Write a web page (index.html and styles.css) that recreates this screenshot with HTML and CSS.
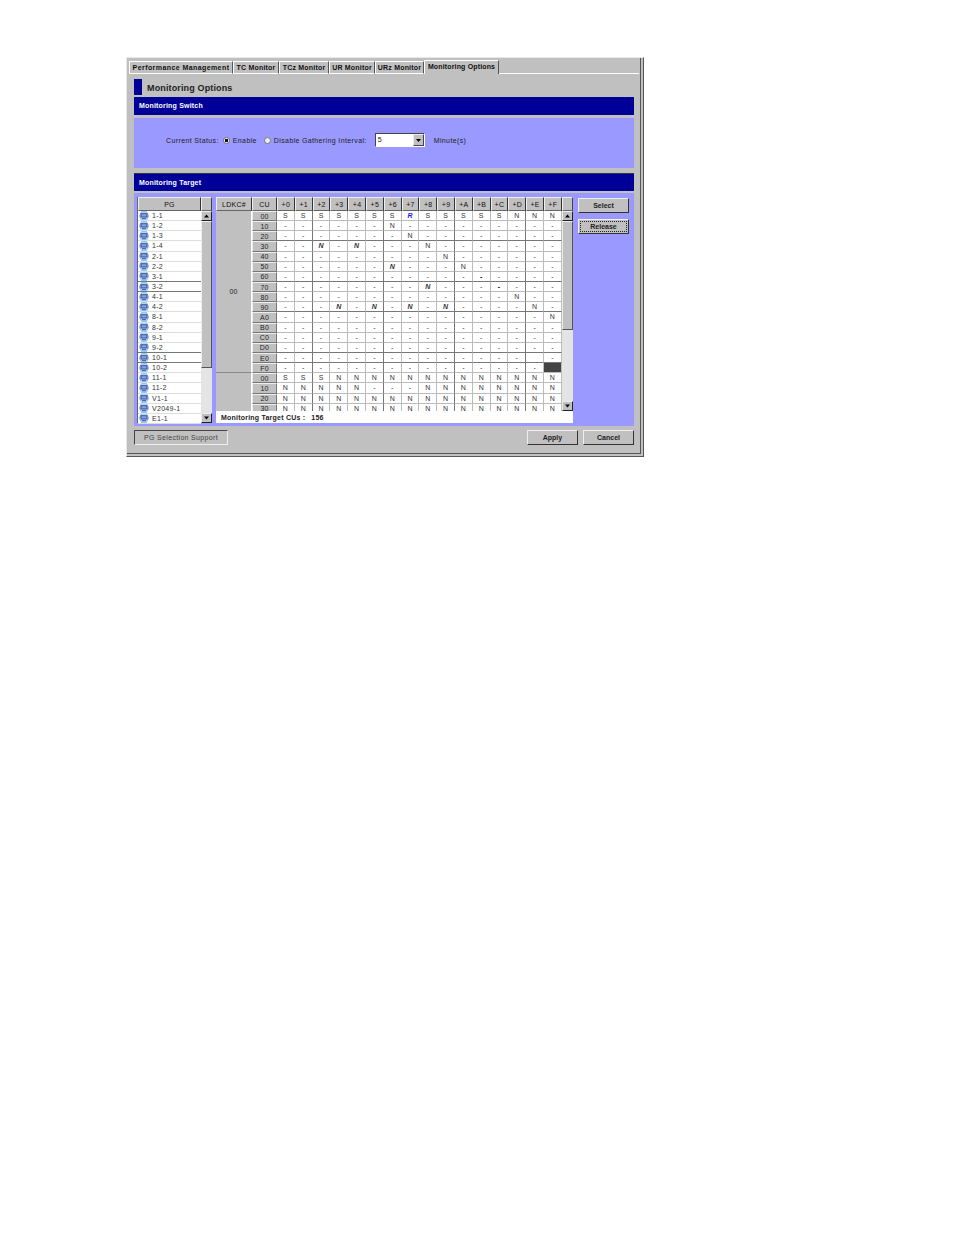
FILE: index.html
```html
<!DOCTYPE html>
<html lang="en">
<head>
<meta charset="utf-8">
<title>Monitoring Options</title>
<link rel="stylesheet" href="styles.css">
</head>
<body>
<svg class="defs" width="0" height="0" aria-hidden="true">
  <symbol id="pg" viewBox="0 0 10 10">
    <path d="M2.500 .5h5L9.800 5 7.500 9.500h-5L.2 5z" fill="#a8d8fa" stroke="#6aa8e8" stroke-width=".6"/>
    <rect x="1.500" y="2.200" width="7" height="4.300" fill="#3a4f9e"/>
    <rect x="2.500" y="3.200" width="5" height="2.300" fill="#8f9fd8"/>
    <rect x="3" y="7.200" width="4" height="1" fill="#3a4f9e"/>
  </symbol>
</svg>
<main class="window">
  <nav class="tabs">
    <span class="tab w1">Performance Management</span>
    <span class="tab w2">TC Monitor</span>
    <span class="tab w3">TCz Monitor</span>
    <span class="tab w4">UR Monitor</span>
    <span class="tab w5">URz Monitor</span>
    <span class="tab active">Monitoring Options</span>
    <span class="tab-rest"></span>
  </nav>
  <section class="content">
    <div class="title"><i class="title-mark"></i><h1>Monitoring Options</h1></div>
    <h2 class="bar">Monitoring Switch</h2>
    <div class="switch-panel">
      <span class="lbl first">Current Status:</span>
      <i class="radio on"></i><span class="lbl">Enable</span>
      <i class="radio"></i><span class="lbl">Disable</span>
      <span class="lbl interval">Gathering Interval:</span>
      <span class="combo"><span class="combo-val">5</span><span class="combo-btn"><svg width="9" height="9" viewBox="0 0 9 9"><path d="M2 3h5L4.500 6z" fill="#000"/></svg></span></span>
      <span class="lbl minutes">Minute(s)</span>
    </div>
    <h2 class="bar second">Monitoring Target</h2>
    <div class="target-panel">
      <div class="pg">
        <div class="pg-list">
          <div class="hd pg-hd">PG</div>
          <div class="pg-row"><svg class="ic"><use href="#pg"/></svg>1-1</div>
          <div class="pg-row"><svg class="ic"><use href="#pg"/></svg>1-2</div>
          <div class="pg-row"><svg class="ic"><use href="#pg"/></svg>1-3</div>
          <div class="pg-row"><svg class="ic"><use href="#pg"/></svg>1-4</div>
          <div class="pg-row"><svg class="ic"><use href="#pg"/></svg>2-1</div>
          <div class="pg-row"><svg class="ic"><use href="#pg"/></svg>2-2</div>
          <div class="pg-row dk"><svg class="ic"><use href="#pg"/></svg>3-1</div>
          <div class="pg-row dk"><svg class="ic"><use href="#pg"/></svg>3-2</div>
          <div class="pg-row"><svg class="ic"><use href="#pg"/></svg>4-1</div>
          <div class="pg-row"><svg class="ic"><use href="#pg"/></svg>4-2</div>
          <div class="pg-row"><svg class="ic"><use href="#pg"/></svg>8-1</div>
          <div class="pg-row"><svg class="ic"><use href="#pg"/></svg>8-2</div>
          <div class="pg-row"><svg class="ic"><use href="#pg"/></svg>9-1</div>
          <div class="pg-row dk"><svg class="ic"><use href="#pg"/></svg>9-2</div>
          <div class="pg-row dk"><svg class="ic"><use href="#pg"/></svg>10-1</div>
          <div class="pg-row"><svg class="ic"><use href="#pg"/></svg>10-2</div>
          <div class="pg-row"><svg class="ic"><use href="#pg"/></svg>11-1</div>
          <div class="pg-row"><svg class="ic"><use href="#pg"/></svg>11-2</div>
          <div class="pg-row"><svg class="ic"><use href="#pg"/></svg>V1-1</div>
          <div class="pg-row"><svg class="ic"><use href="#pg"/></svg>V2049-1</div>
          <div class="pg-row"><svg class="ic"><use href="#pg"/></svg>E1-1</div>
        </div>
        <div class="scroll pg-scroll">
          <div class="sb-corner"></div>
          <div class="sb-btn"><svg width="7" height="4" viewBox="0 0 7 4"><path d="M3.500 .5L6 3.500H1z"/></svg></div>
          <div class="sb-thumb"></div>
          <div class="sb-track"></div>
          <div class="sb-btn"><svg width="7" height="4" viewBox="0 0 7 4"><path d="M1 .5h5L3.500 3.500z"/></svg></div>
        </div>
      </div>
      <div class="cu-wrap">
        <div class="cu-top">
          <div class="cu-clip">
            <div class="cu-grid">
              <div class="hd">LDKC#</div><div class="hd">CU</div>
              <div class="hd">+0</div><div class="hd">+1</div><div class="hd">+2</div><div class="hd">+3</div><div class="hd">+4</div><div class="hd">+5</div><div class="hd">+6</div><div class="hd">+7</div><div class="hd">+8</div><div class="hd">+9</div><div class="hd">+A</div><div class="hd">+B</div><div class="hd">+C</div><div class="hd">+D</div><div class="hd">+E</div><div class="hd">+F</div>

              <div class="ldkc span16">00</div>
              <div class="row"><div class="cu">00</div><b>S</b><b>S</b><b>S</b><b>S</b><b>S</b><b>S</b><b>S</b><b class="r">R</b><b>S</b><b>S</b><b>S</b><b>S</b><b>S</b><b>N</b><b>N</b><b>N</b></div>
              <div class="row"><div class="cu">10</div><b>-</b><b>-</b><b>-</b><b>-</b><b>-</b><b>-</b><b>N</b><b>-</b><b>-</b><b>-</b><b>-</b><b>-</b><b>-</b><b>-</b><b>-</b><b>-</b></div>
              <div class="row dk"><div class="cu">20</div><b>-</b><b>-</b><b>-</b><b>-</b><b>-</b><b>-</b><b>-</b><b>N</b><b>-</b><b>-</b><b>-</b><b>-</b><b>-</b><b>-</b><b>-</b><b>-</b></div>
              <div class="row"><div class="cu">30</div><b>-</b><b>-</b><b class="i">N</b><b>-</b><b class="i">N</b><b>-</b><b>-</b><b>-</b><b>N</b><b>-</b><b>-</b><b>-</b><b>-</b><b>-</b><b>-</b><b>-</b></div>
              <div class="row"><div class="cu">40</div><b>-</b><b>-</b><b>-</b><b>-</b><b>-</b><b>-</b><b>-</b><b>-</b><b>-</b><b>N</b><b>-</b><b>-</b><b>-</b><b>-</b><b>-</b><b>-</b></div>
              <div class="row"><div class="cu">50</div><b>-</b><b>-</b><b>-</b><b>-</b><b>-</b><b>-</b><b class="i">N</b><b>-</b><b>-</b><b>-</b><b>N</b><b>-</b><b>-</b><b>-</b><b>-</b><b>-</b></div>
              <div class="row dk"><div class="cu">60</div><b>-</b><b>-</b><b>-</b><b>-</b><b>-</b><b>-</b><b>-</b><b>-</b><b>-</b><b>-</b><b>-</b><b class="x">-</b><b>-</b><b>-</b><b>-</b><b>-</b></div>
              <div class="row"><div class="cu">70</div><b>-</b><b>-</b><b>-</b><b>-</b><b>-</b><b>-</b><b>-</b><b>-</b><b class="i">N</b><b>-</b><b>-</b><b>-</b><b class="x">-</b><b>-</b><b>-</b><b>-</b></div>
              <div class="row"><div class="cu">80</div><b>-</b><b>-</b><b>-</b><b>-</b><b>-</b><b>-</b><b>-</b><b>-</b><b>-</b><b>-</b><b>-</b><b>-</b><b>-</b><b>N</b><b>-</b><b>-</b></div>
              <div class="row dk"><div class="cu">90</div><b>-</b><b>-</b><b>-</b><b class="i">N</b><b>-</b><b class="i">N</b><b>-</b><b class="i">N</b><b>-</b><b class="i">N</b><b>-</b><b>-</b><b>-</b><b>-</b><b>N</b><b>-</b></div>
              <div class="row"><div class="cu">A0</div><b>-</b><b>-</b><b>-</b><b>-</b><b>-</b><b>-</b><b>-</b><b>-</b><b>-</b><b>-</b><b>-</b><b>-</b><b>-</b><b>-</b><b>-</b><b>N</b></div>
              <div class="row"><div class="cu">B0</div><b>-</b><b>-</b><b>-</b><b>-</b><b>-</b><b>-</b><b>-</b><b>-</b><b>-</b><b>-</b><b>-</b><b>-</b><b>-</b><b>-</b><b>-</b><b>-</b></div>
              <div class="row"><div class="cu">C0</div><b>-</b><b>-</b><b>-</b><b>-</b><b>-</b><b>-</b><b>-</b><b>-</b><b>-</b><b>-</b><b>-</b><b>-</b><b>-</b><b>-</b><b>-</b><b>-</b></div>
              <div class="row dk"><div class="cu">D0</div><b>-</b><b>-</b><b>-</b><b>-</b><b>-</b><b>-</b><b>-</b><b>-</b><b>-</b><b>-</b><b>-</b><b>-</b><b>-</b><b>-</b><b>-</b><b>-</b></div>
              <div class="row dk"><div class="cu">E0</div><b>-</b><b>-</b><b>-</b><b>-</b><b>-</b><b>-</b><b>-</b><b>-</b><b>-</b><b>-</b><b>-</b><b>-</b><b>-</b><b>-</b><b></b><b>-</b></div>
              <div class="row"><div class="cu">F0</div><b>-</b><b>-</b><b>-</b><b>-</b><b>-</b><b>-</b><b>-</b><b>-</b><b>-</b><b>-</b><b>-</b><b>-</b><b>-</b><b>-</b><b>-</b><b class="fill"></b></div>

              <div class="ldkc span4"></div>
              <div class="row"><div class="cu">00</div><b>S</b><b>S</b><b>S</b><b>N</b><b>N</b><b>N</b><b>N</b><b>N</b><b>N</b><b>N</b><b>N</b><b>N</b><b>N</b><b>N</b><b>N</b><b>N</b></div>
              <div class="row"><div class="cu">10</div><b>N</b><b>N</b><b>N</b><b>N</b><b>N</b><b>-</b><b>-</b><b>-</b><b>N</b><b>N</b><b>N</b><b>N</b><b>N</b><b>N</b><b>N</b><b>N</b></div>
              <div class="row"><div class="cu">20</div><b>N</b><b>N</b><b>N</b><b>N</b><b>N</b><b>N</b><b>N</b><b>N</b><b>N</b><b>N</b><b>N</b><b>N</b><b>N</b><b>N</b><b>N</b><b>N</b></div>
              <div class="row"><div class="cu">30</div><b>N</b><b>N</b><b>N</b><b>N</b><b>N</b><b>N</b><b>N</b><b>N</b><b>N</b><b>N</b><b>N</b><b>N</b><b>N</b><b>N</b><b>N</b><b>N</b></div>
            </div>
          </div>
          <div class="scroll cu-scroll">
            <div class="sb-corner"></div>
            <div class="sb-btn"><svg width="7" height="4" viewBox="0 0 7 4"><path d="M3.500 .5L6 3.500H1z"/></svg></div>
            <div class="sb-thumb"></div>
            <div class="sb-track"></div>
            <div class="sb-btn"><svg width="7" height="4" viewBox="0 0 7 4"><path d="M1 .5h5L3.500 3.500z"/></svg></div>
          </div>
        </div>
        <div class="cu-foot"><span>Monitoring Target CUs :</span><span>156</span></div>
      </div>
      <div class="side">
        <button class="btn" type="button">Select</button>
        <button class="btn focus" type="button"><span>Release</span></button>
      </div>
    </div>
    <div class="footer">
      <button class="btn sunken" type="button">PG Selection Support</button>
      <button class="btn apply" type="button">Apply</button>
      <button class="btn" type="button">Cancel</button>
    </div>
  </section>
</main>
</body>
</html>
```

FILE: styles.css
```css
* { box-sizing: border-box; }
html, body { margin: 0; padding: 0; background: #fff; }
body { width: 954px; height: 1235px; overflow: hidden; font-family: "Liberation Sans", Arial, sans-serif; font-size: 7px; color: #222; }
.defs { position: absolute; }

.window { margin: 57px 0 0 126px; width: 518px; height: 400px; background: #c0c0c0; border: 1px solid #555; border-top-color: #e8e8e8; border-left-color: #e8e8e8; display: flex; flex-direction: column; padding: 2px 1px 1px 1px; box-shadow: inset -2px -2px 0 #c0c0c0, inset -3px -3px 0 #555; }

.tabs { display: flex; height: 14px; margin-left: 1px; align-items: flex-end; flex: none; }
.tab { height: 13px; display: flex; align-items: center; justify-content: center; padding-bottom: 1px; font-size: 7px; font-weight: bold; color: #111; letter-spacing: .2px; border-top: 1px solid #fff; border-left: 1px solid #fff; border-right: 1px solid #555; border-bottom: 1px solid #fff; white-space: nowrap; }
.w1 { width: 104px; letter-spacing: .42px; } .w2 { width: 46px; } .w3 { width: 50px; } .w4 { width: 46px; } .w5 { width: 49px; }
.tab.active { height: 14px; width: 75px; border-bottom: none; align-items: flex-start; letter-spacing: .15px; padding: 2px 0 0; }
.tab-rest { flex: 1; border-bottom: 1px solid #fff; height: 1px; margin-right: 3px; }

.content { flex: 1; padding: 5px 8px 0 6px; display: flex; flex-direction: column; min-height: 0; }
.title { display: flex; align-items: center; height: 16px; gap: 5px; flex: none; }
.title-mark { width: 8px; height: 16px; background: #000099; }
h1 { margin: 0; padding-top: 2px; font-size: 9px; font-weight: bold; letter-spacing: .14px; color: #222; }
.bar { margin: 2px 0 0; height: 18px; background: #000099; color: #fff; font-size: 7px; font-weight: bold; letter-spacing: .19px; line-height: 18px; padding-left: 5px; flex: none; }
.bar.second { margin-top: 5px; border-top: 1px solid #334; line-height: 17px; }

.switch-panel { margin-top: 3px; height: 50px; background: #9999ff; display: flex; align-items: center; padding: 0 0 6px 32px; flex: none; }
.lbl { font-size: 7px; color: #222; letter-spacing: .38px; white-space: nowrap; }
.radio { width: 7px; height: 7px; border-radius: 50%; background: #eee; border: 1px solid #777; display: block; }
.radio.on { background: radial-gradient(circle, #111 0 1.500px, #eee 2px); }
.first + .radio { margin-left: 4px; margin-right: 3px; }
.lbl + .radio + .lbl + .radio { margin-left: 7px; margin-right: 3px; }
.interval { margin-left: 2px; }
.combo { margin-left: 8px; width: 50px; height: 14px; background: #fff; display: flex; align-items: stretch; border: 1px solid; border-color: #444 #fff #fff #444; }
.combo-val { flex: 1; padding-left: 2px; line-height: 11px; color: #222; }
.combo-btn { width: 11px; background: #c0c0c0; border: 1px solid; border-color: #eee #444 #444 #eee; display: flex; align-items: center; justify-content: center; }
.minutes { margin-left: 9px; }

.target-panel { margin-top: 2px; height: 233px; background: #9999ff; display: flex; padding: 4px 0 0 3px; flex: none; }
.hd { height: 14px; background: #c0c0c0; display: flex; align-items: center; justify-content: center; font-size: 7px; color: #111; border: 1px solid; border-color: #eee #333 #666 #eee; letter-spacing: .3px; }

.pg { width: 76px; height: 226px; display: flex; flex: none; }
.pg-list { width: 64px; background: #fff; border-left: 1px solid #666; }
.pg-row { height: 10.15px; display: flex; align-items: center; border-bottom: 1px solid #ddd; font-size: 7px; color: #333; letter-spacing: .3px; line-height: 9px; overflow: hidden; }
.pg-row.dk { border-bottom-color: #777; }
.ic { width: 10px; height: 10px; flex: none; margin: 0 3px 0 1px; }

.scroll { display: flex; flex-direction: column; width: 11px; flex: none; background: #c0c0c0; }
.sb-corner { height: 14px; background: #c0c0c0; border: 1px solid; border-color: #eee #444 #666 #eee; flex: none; }
.sb-btn { height: 10px; background: #c0c0c0; border: 1px solid; border-color: #eee #222 #222 #eee; display: flex; align-items: center; justify-content: center; flex: none; }
.sb-btn path { fill: #000; }
.sb-thumb { background: #c0c0c0; border: 1px solid; border-color: #eee #555 #555 #eee; flex: none; }
.sb-track { flex: 1; background-color: #e4e4e4; background-image: radial-gradient(#b0b0b0 .6px, transparent .7px); background-size: 2px 2px; }
.pg-scroll { height: 226px; }
.pg-scroll .sb-thumb { height: 147px; }
.cu-scroll { height: 214px; }
.cu-scroll .sb-thumb { height: 109px; }

.cu-wrap { margin-left: 3px; width: 357px; height: 226px; display: flex; flex-direction: column; flex: none; background: #fff; }
.cu-top { display: flex; height: 214px; flex: none; }
.cu-clip { width: 346px; height: 214px; overflow: hidden; }
.cu-grid { display: grid; grid-template-columns: 36px 25px repeat(16, 17.81px); grid-template-rows: 14px repeat(20, 10.15px); background: #fff; }
.row { display: contents; }
.row > b { display: flex; align-items: center; justify-content: center; font-size: 7px; font-weight: normal; color: #333; border-right: 1px solid #bbb; border-bottom: 1px solid #bbb; overflow: hidden; line-height: 9px; }
.row > b:nth-child(3), .row > b:nth-child(7), .row > b:nth-child(11), .row > b:nth-child(15) { border-right-color: #777; }
.row.dk > b { border-bottom-color: #777; }
.row > b.i { font-style: italic; font-weight: bold; color: #333; }
.row > b.r { font-style: italic; font-weight: bold; color: #1a1aee; }
.row > b.x { font-weight: bold; color: #000; }
.row > b.fill { background: #444; }
.cu { background: #c0c0c0; display: flex; align-items: center; justify-content: center; color: #222; font-size: 7px; letter-spacing: .2px; border: 1px solid; border-color: #eee #777 #777 #eee; overflow: hidden; }
.ldkc { background: #c0c0c0; display: flex; align-items: center; justify-content: center; color: #222; font-size: 7px; border-right: 1px solid #fff; border-bottom: 1px solid #888; letter-spacing: .2px; }
.span16 { grid-row: span 16; }
.span4 { grid-row: span 4; }
.cu-foot { flex: 1; display: flex; align-items: center; gap: 6px; padding-left: 5px; font-size: 7px; font-weight: bold; color: #222; letter-spacing: .22px; border-top: 1px solid #fff; }

.side { margin-left: 5px; width: 51px; display: flex; flex-direction: column; gap: 6px; padding-top: 1px; flex: none; }
.btn { width: 51px; height: 15px; padding: 0; background: #c0c0c0; border: 1px solid; border-color: #eee #333 #333 #eee; font-family: inherit; font-size: 7px; font-weight: bold; color: #222; display: flex; align-items: center; justify-content: center; }
.btn.focus span { width: 47px; height: 11px; border: 1px dotted #222; display: flex; align-items: center; justify-content: center; }

.footer { display: flex; margin-top: 4px; height: 15px; flex: none; }
.sunken { width: 94px; border-color: #444 #eee #eee #444; font-weight: normal; color: #444; letter-spacing: .33px; }
.apply { margin-left: auto; margin-right: 5px; }
```
